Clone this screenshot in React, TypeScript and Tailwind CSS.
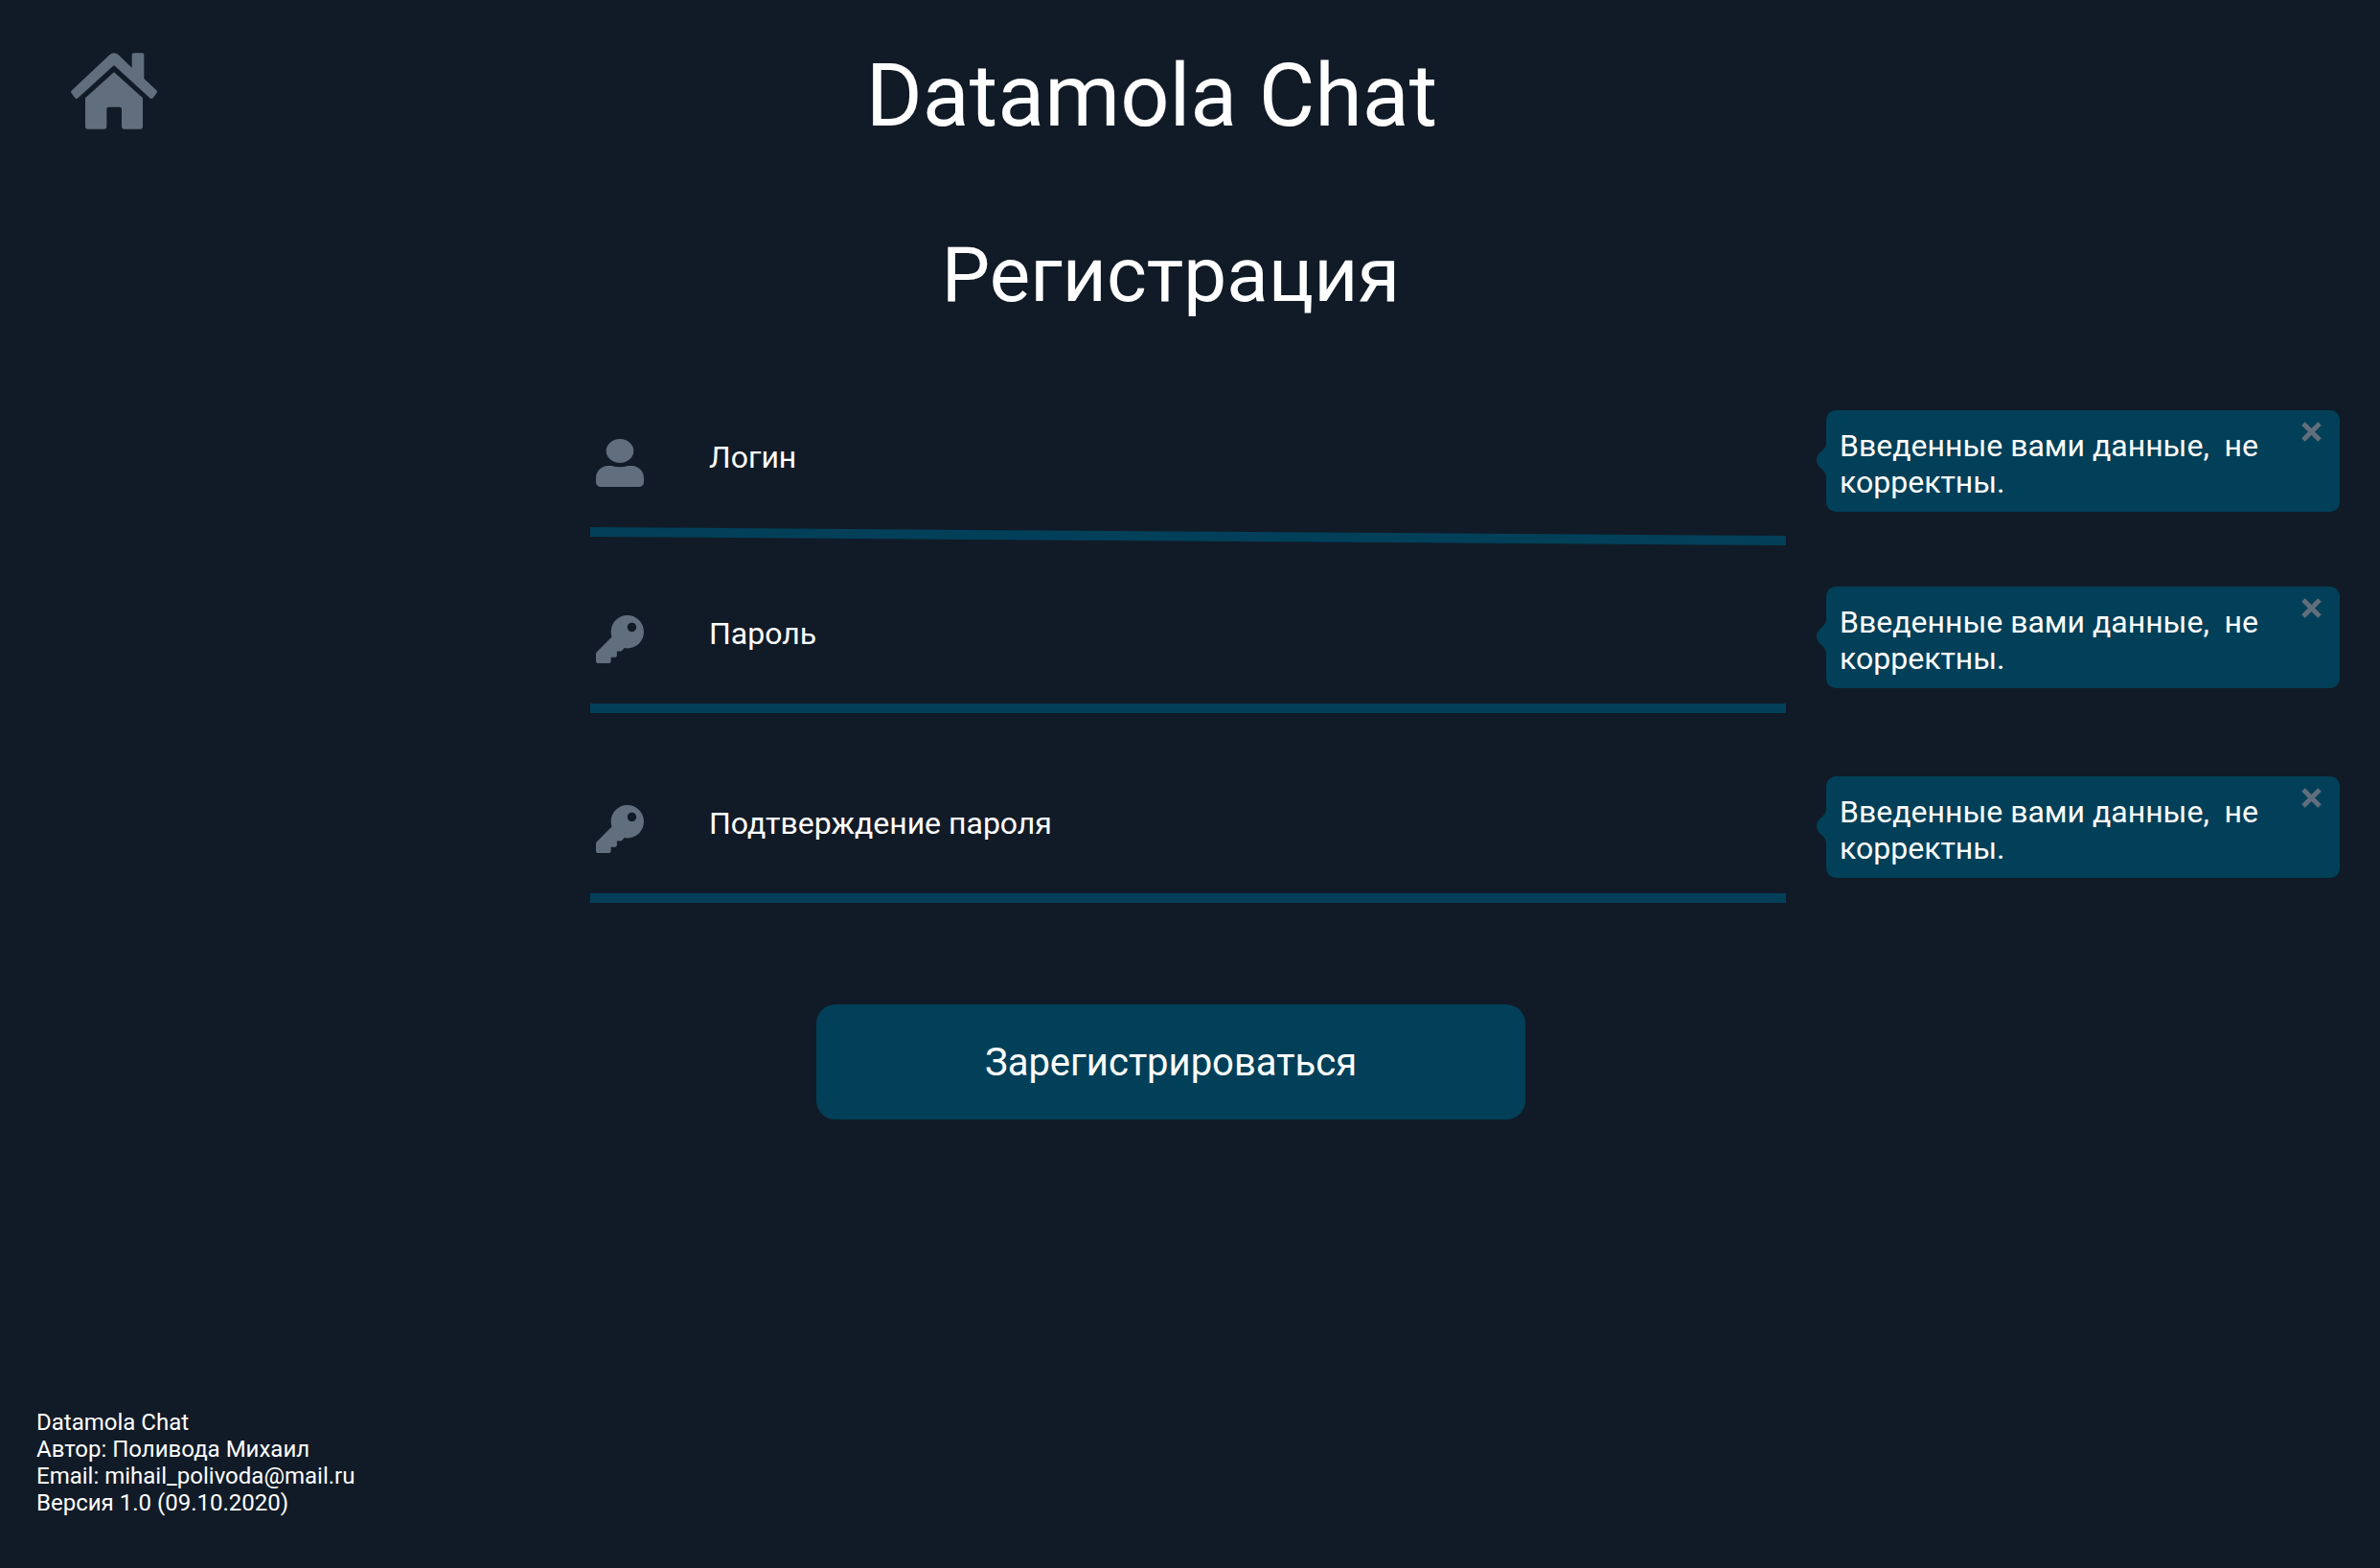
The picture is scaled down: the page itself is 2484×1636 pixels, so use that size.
import { FaKey } from "react-icons/fa";

function HomeIcon() {
  return (
    <svg viewBox="0 0 270 240" className="h-20 w-[90px] fill-[#616e7e]" aria-hidden="true">
      <path d="M3 118 L121 7 Q135 -5 149 7 L191 47 V7 Q191 1 197 1 H223 Q229 1 229 7 V81 L268 118 Q272 122 268 127 L257 142 Q252 147 247 142 L135 39 L22 142 Q17 147 13 142 L2 127 Q-2 122 3 118 Z" />
      <path d="M135 61 L225 142 V232 Q225 239 218 239 H166 Q159 239 159 232 V177 Q159 170 152 170 H119 Q112 170 112 177 V232 Q112 239 105 239 H52 Q45 239 45 232 V142 Z" />
    </svg>
  );
}

function UserIcon() {
  return (
    <svg viewBox="0 0 150 150" className="size-[50px] shrink-0 fill-[#616e7e]" aria-hidden="true">
      <ellipse cx="75" cy="37.5" rx="43" ry="37.5" />
      <path d="M38 84 H50 Q60 88 75 88 Q90 88 100 84 H112 C133 84 150 101 150 122 V136 C150 144 144 150 136 150 H14 C6 150 0 144 0 136 V122 C0 101 17 84 38 84 Z" />
    </svg>
  );
}

function KeyIcon() {
  return <FaKey className="size-[50px] shrink-0 fill-[#616e7e]" aria-hidden="true" />;
}

function Underline({ slanted = false }: { slanted?: boolean }) {
  if (!slanted) return <div className="h-2.5 bg-[#024059]" />;
  return (
    <svg viewBox="0 0 1248 19" preserveAspectRatio="none" className="-mb-[9px] block h-[19px] w-full fill-[#024059]" aria-hidden="true">
      <polygon points="0,0 1248,9 1248,19 0,10" />
    </svg>
  );
}

function ErrorBubble() {
  return (
    <div role="alert" className="relative flex h-[106px] items-start justify-between rounded-[10px] bg-[#024059] pt-[18px] pr-[19px] pl-3.5">
      <svg viewBox="0 0 10 36" className="absolute top-[34px] -left-2.5 h-9 w-2.5 fill-[#024059]" aria-hidden="true">
        <path d="M10 0 C10 9 0 9 0 18 C0 27 10 27 10 36 Z" />
      </svg>
      <p className="text-[32px] leading-[38px] whitespace-pre-wrap">
        {"Введенные вами данные,  не корректны."}
      </p>
      <button type="button" aria-label="Закрыть" className="-mt-1.5 shrink-0 cursor-pointer">
        <svg viewBox="0 0 21 21" className="size-[21px] stroke-[#616e7e]" aria-hidden="true">
          <path d="M2 2 L19 19 M19 2 L2 19" strokeWidth="5" />
        </svg>
      </button>
    </div>
  );
}

type FieldProps = {
  id: string;
  label: string;
  type: string;
  icon: React.ReactNode;
  slanted?: boolean;
};

function Field({ id, label, type, icon, slanted }: FieldProps) {
  return (
    <div className="grid grid-cols-[1248fr_536fr] gap-[42px]">
      <div>
        <div className="flex h-[122px] items-center gap-[68px] pb-3 pl-1.5">
          {icon}
          <input
            id={id}
            type={type}
            placeholder={label}
            aria-label={label}
            className="min-w-0 flex-1 bg-transparent pb-3 text-[32px] leading-[38px] text-white outline-none placeholder:text-white placeholder:opacity-100"
          />
        </div>
        <Underline slanted={slanted} />
      </div>
      <ErrorBubble />
    </div>
  );
}

export default function App() {
  return (
    <div className="flex min-h-screen flex-col bg-[#111b27] font-[Roboto,sans-serif] text-white">
      <header className="grid grid-cols-[1fr_auto_1fr] items-start pt-12 pr-[154px] pl-[74px]">
        <a href="#" aria-label="Домой" className="mt-[7px] w-fit">
          <HomeIcon />
        </a>
        <h1 className="text-[90px] leading-[106px]">Datamola Chat</h1>
      </header>
      <main className="flex flex-1 flex-col">
        <h2 className="mt-[86px] pr-10 text-center text-[80px] leading-[94px]">Регистрация</h2>
        <form className="mt-[94px] flex flex-col">
          <div className="flex flex-col pr-[42px] pl-[24.8%]">
            <Field id="login" label="Логин" type="text" icon={<UserIcon />} slanted />
            <div className="mt-[52px]">
              <Field id="password" label="Пароль" type="password" icon={<KeyIcon />} />
            </div>
            <div className="mt-[66px]">
              <Field id="confirm" label="Подтверждение пароля" type="password" icon={<KeyIcon />} />
            </div>
          </div>
          <div className="mt-[106px] flex justify-center pr-10">
            <button type="submit" className="h-[120px] w-[740px] cursor-pointer rounded-[20px] bg-[#024059] pt-0.5 text-[40px] leading-[48px]">
              Зарегистрироваться
            </button>
          </div>
        </form>
      </main>
      <footer className="px-[38px] pb-[54px] text-2xl leading-7">
        <p>Datamola Chat</p>
        <p>Автор: Поливода Михаил</p>
        <p>Email: mihail_polivoda@mail.ru</p>
        <p>Версия 1.0 (09.10.2020)</p>
      </footer>
    </div>
  );
}
